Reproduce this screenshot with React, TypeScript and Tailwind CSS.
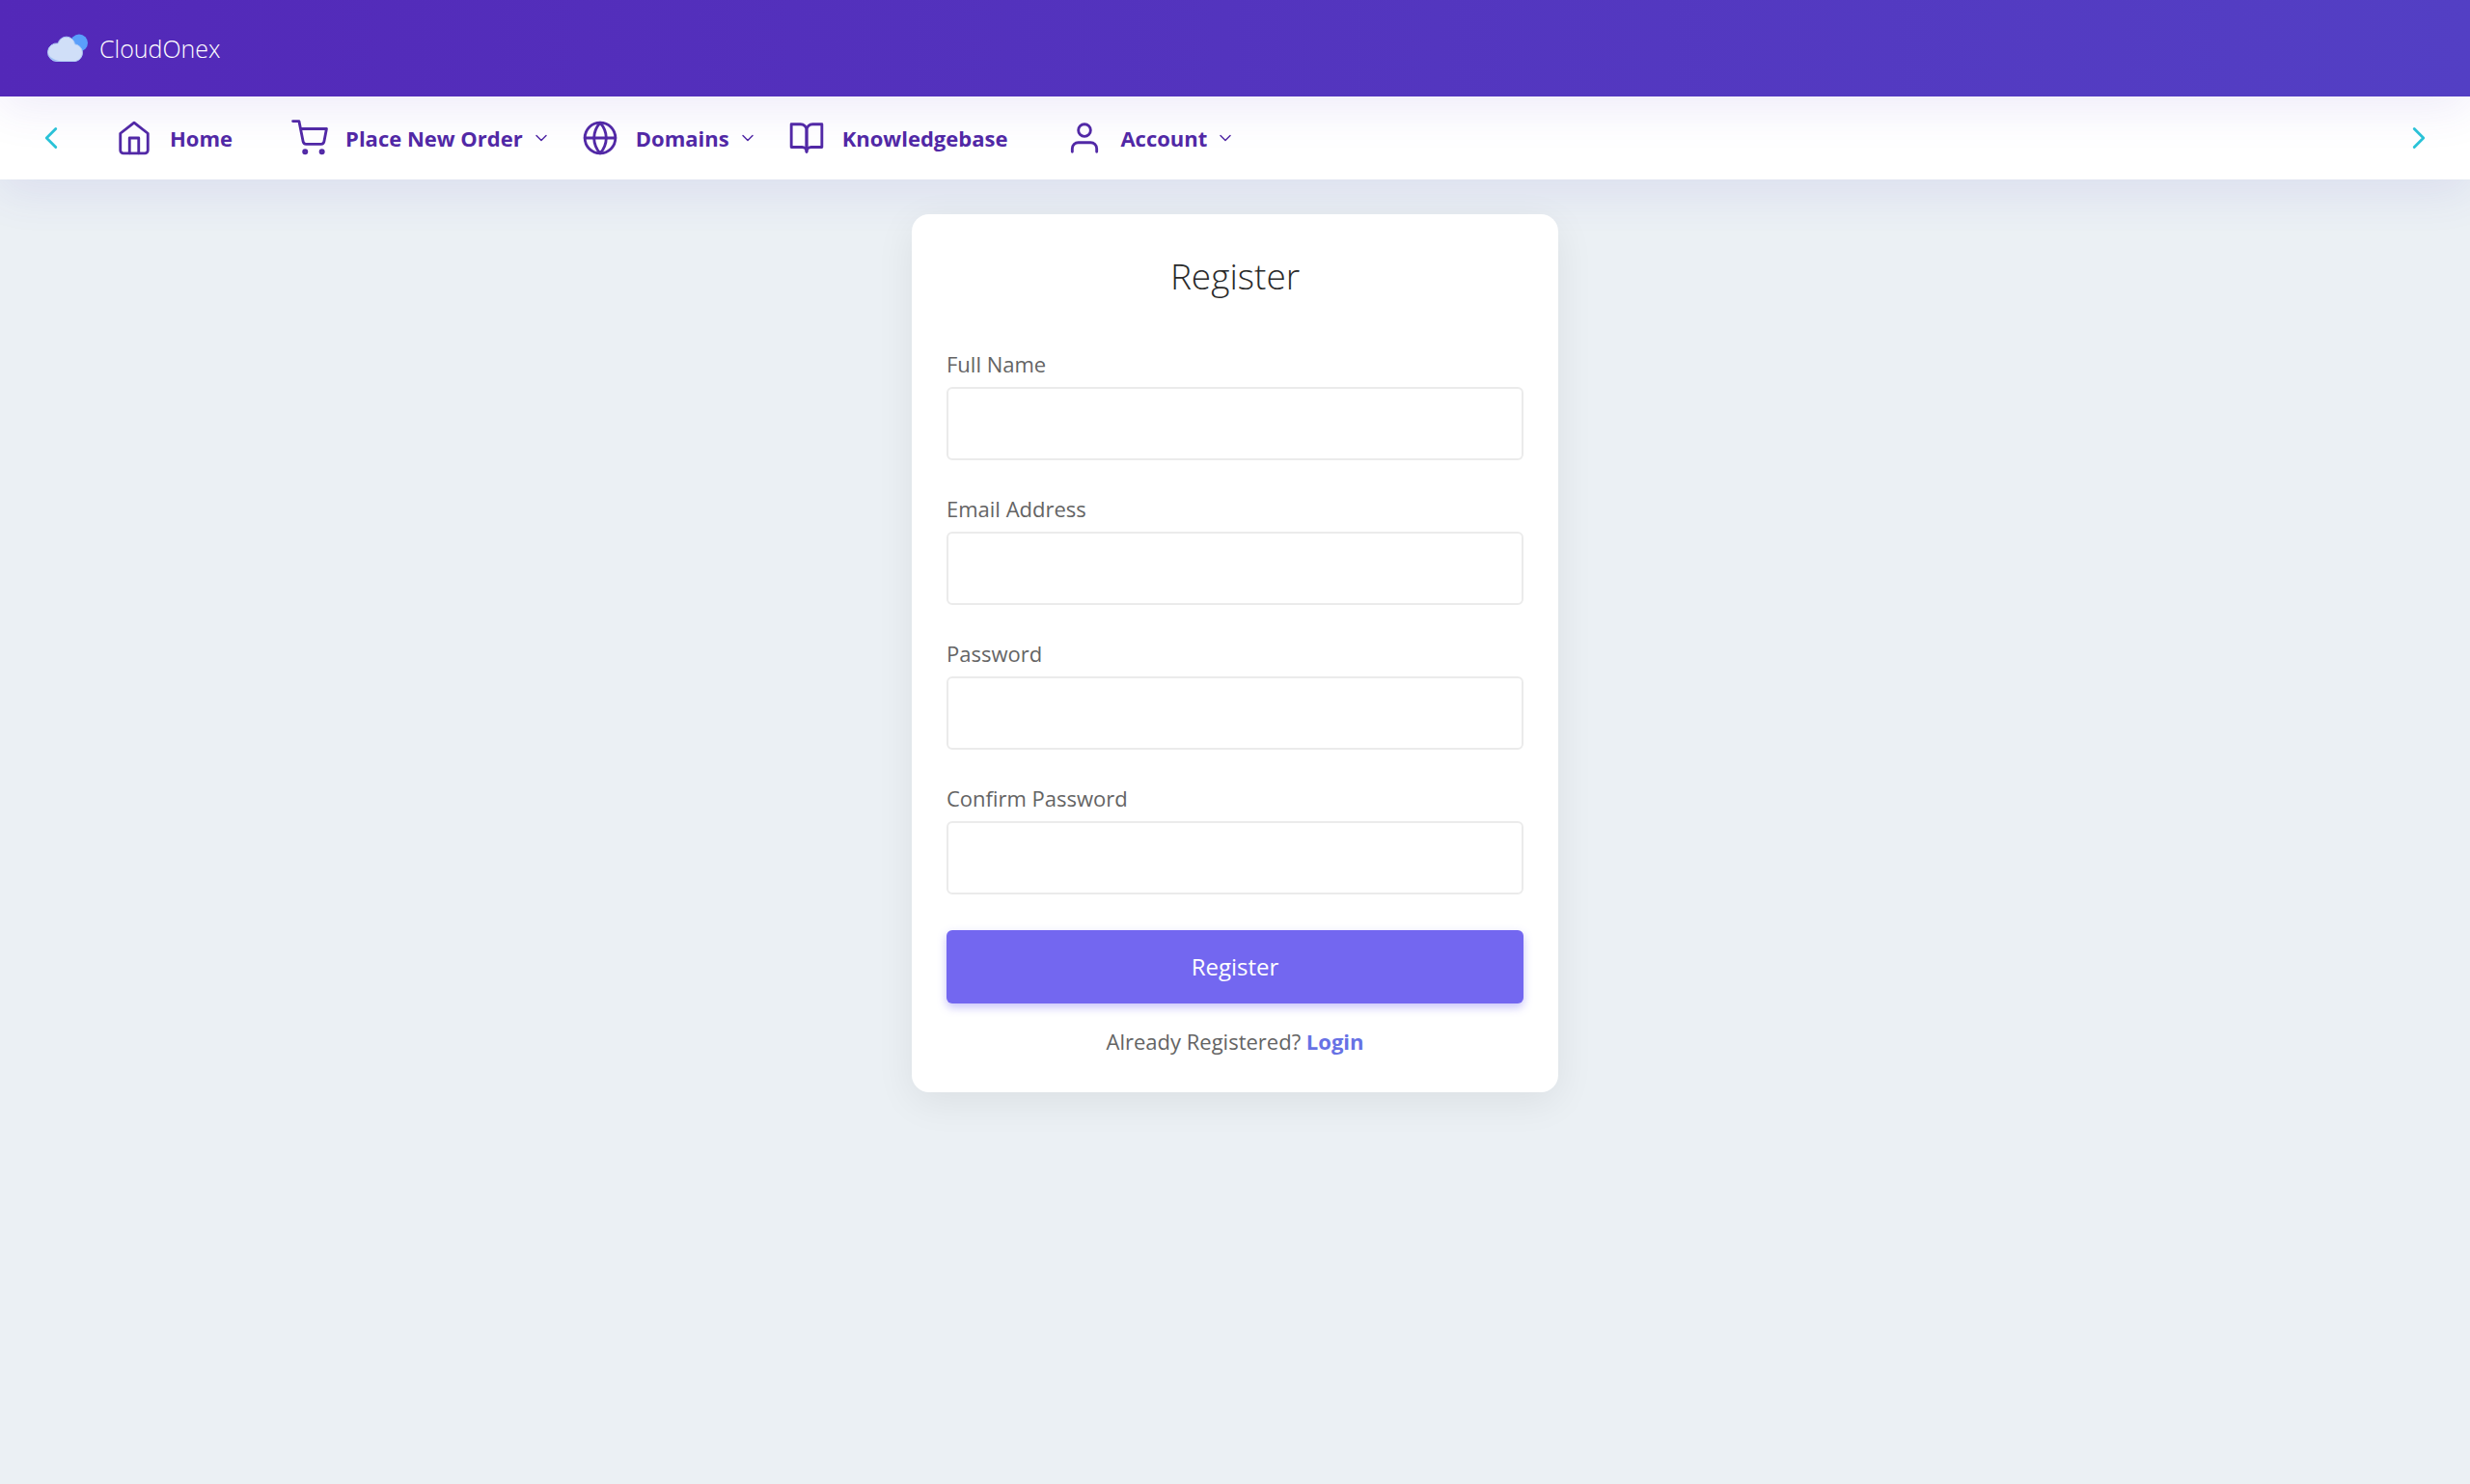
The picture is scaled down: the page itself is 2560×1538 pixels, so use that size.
import { ChevronDown, ChevronLeft, ChevronRight } from "lucide-react";
import type { ReactNode } from "react";
import { FiGlobe, FiHome, FiShoppingCart, FiUser } from "react-icons/fi";

type NavItem = { label: string; icon: ReactNode; menu?: boolean };

function OpenBook() {
  return (
    <svg viewBox="0 0 24 24" className="size-[38px]" fill="none" stroke="currentColor" strokeWidth={1.8} strokeLinecap="round" strokeLinejoin="round" aria-hidden="true">
      <path d="M2 3h6a4 4 0 0 1 4 4v14a3 3 0 0 0-3-3H2z" />
      <path d="M22 3h-6a4 4 0 0 0-4 4v14a3 3 0 0 1 3-3h7z" />
    </svg>
  );
}

const navItems: NavItem[] = [
  { label: "Home", icon: <FiHome className="size-[38px]" strokeWidth={1.8} /> },
  { label: "Place New Order", icon: <FiShoppingCart className="size-[38px]" strokeWidth={1.8} />, menu: true },
  { label: "Domains", icon: <FiGlobe className="size-[38px]" strokeWidth={1.8} />, menu: true },
  { label: "Knowledgebase", icon: <OpenBook /> },
  { label: "Account", icon: <FiUser className="size-[38px]" strokeWidth={1.8} />, menu: true },
];

const fields = [
  { id: "full-name", label: "Full Name", type: "text" },
  { id: "email", label: "Email Address", type: "email" },
  { id: "password", label: "Password", type: "password" },
  { id: "confirm-password", label: "Confirm Password", type: "password" },
];

function CloudLogo() {
  return (
    <svg viewBox="0 0 44 30" className="h-[30px] w-[44px]" aria-hidden="true">
      <circle cx="34" cy="9.500" r="9" fill="#5a9ffb" />
      <path
        d="M11 28.500a9.300 9.300 0 1 1 1.200-18.500A8.800 8.800 0 0 1 29.500 10.800A9 9 0 0 1 30.500 28.500z"
        fill="#d0dff8"
        stroke="#b0cbf6"
        strokeWidth="1"
      />
      <path d="M2 21c1.500 4.500 5 7.500 9 7.500h4C10 27.500 5 26 2 21z" fill="#9dbff5" />
    </svg>
  );
}

export default function App() {
  return (
    <div className="min-h-screen bg-[#ebf0f4] font-['Open_Sans',sans-serif] text-[22px] leading-[34px] text-[#646464]">
      <header className="relative z-20 flex h-[100px] items-center bg-linear-to-r from-[#5328b8] to-[#533fc4] px-12 shadow-[0_12px_48px_rgba(85,60,200,0.1)]">
        <a href="#" className="flex items-center gap-[11px] text-[25px] font-light text-white">
          <CloudLogo />
          CloudOnex
        </a>
      </header>

      <nav className="relative z-10 flex h-[86px] items-center justify-between bg-white px-[34px] shadow-[0_12px_48px_rgba(85,70,200,0.11)]">
        <div className="flex items-center gap-12">
          <button type="button" aria-label="Scroll left" className="text-[#2bc4d8]">
            <ChevronLeft className="size-[38px]" strokeWidth={1.8} />
          </button>
          <ul className="flex items-center">
            {navItems.map((item) => (
              <li key={item.label} className={item.menu ? "pr-8" : "pr-[61px]"}>
                <a href="#" className="flex items-center gap-[18px] font-bold text-[#5229a6]">
                  {item.icon}
                  <span className="flex items-center gap-[9px]">
                    {item.label}
                    {item.menu && <ChevronDown className="size-[20px]" strokeWidth={1.8} />}
                  </span>
                </a>
              </li>
            ))}
          </ul>
        </div>
        <button type="button" aria-label="Scroll right" className="text-[#2bc4d8]">
          <ChevronRight className="size-[38px]" strokeWidth={1.8} />
        </button>
      </nav>

      <main className="relative z-10 flex justify-center px-4 pt-9">
        <form className="w-full max-w-[670px] rounded-[18px] bg-white p-9 shadow-[0_10px_40px_rgba(0,0,0,0.07)]">
          <h1 className="mb-[46px] text-center text-[37px] leading-[56px] font-light text-[#2a2a2a]">Register</h1>
          <div className="flex flex-col gap-[33px]">
            {fields.map((field) => (
              <div key={field.id}>
                <label htmlFor={field.id} className="mb-[7px] block">
                  {field.label}
                </label>
                <input
                  id={field.id}
                  type={field.type}
                  className="block h-[76px] w-full rounded-[6px] border-2 border-[#ebebeb] bg-white px-5 outline-none"
                />
              </div>
            ))}
          </div>
          <button type="submit" className="mt-[37px] block h-[76px] w-full rounded-[6px] bg-[#7367f0] text-[24px] text-white shadow-[0_4px_10px_rgba(115,103,240,0.4)]">
            Register
          </button>
          <p className="mt-[22px] text-center">
            Already Registered?{" "}
            <a href="#" className="font-bold text-[#6772e5]">
              Login
            </a>
          </p>
        </form>
      </main>
    </div>
  );
}
